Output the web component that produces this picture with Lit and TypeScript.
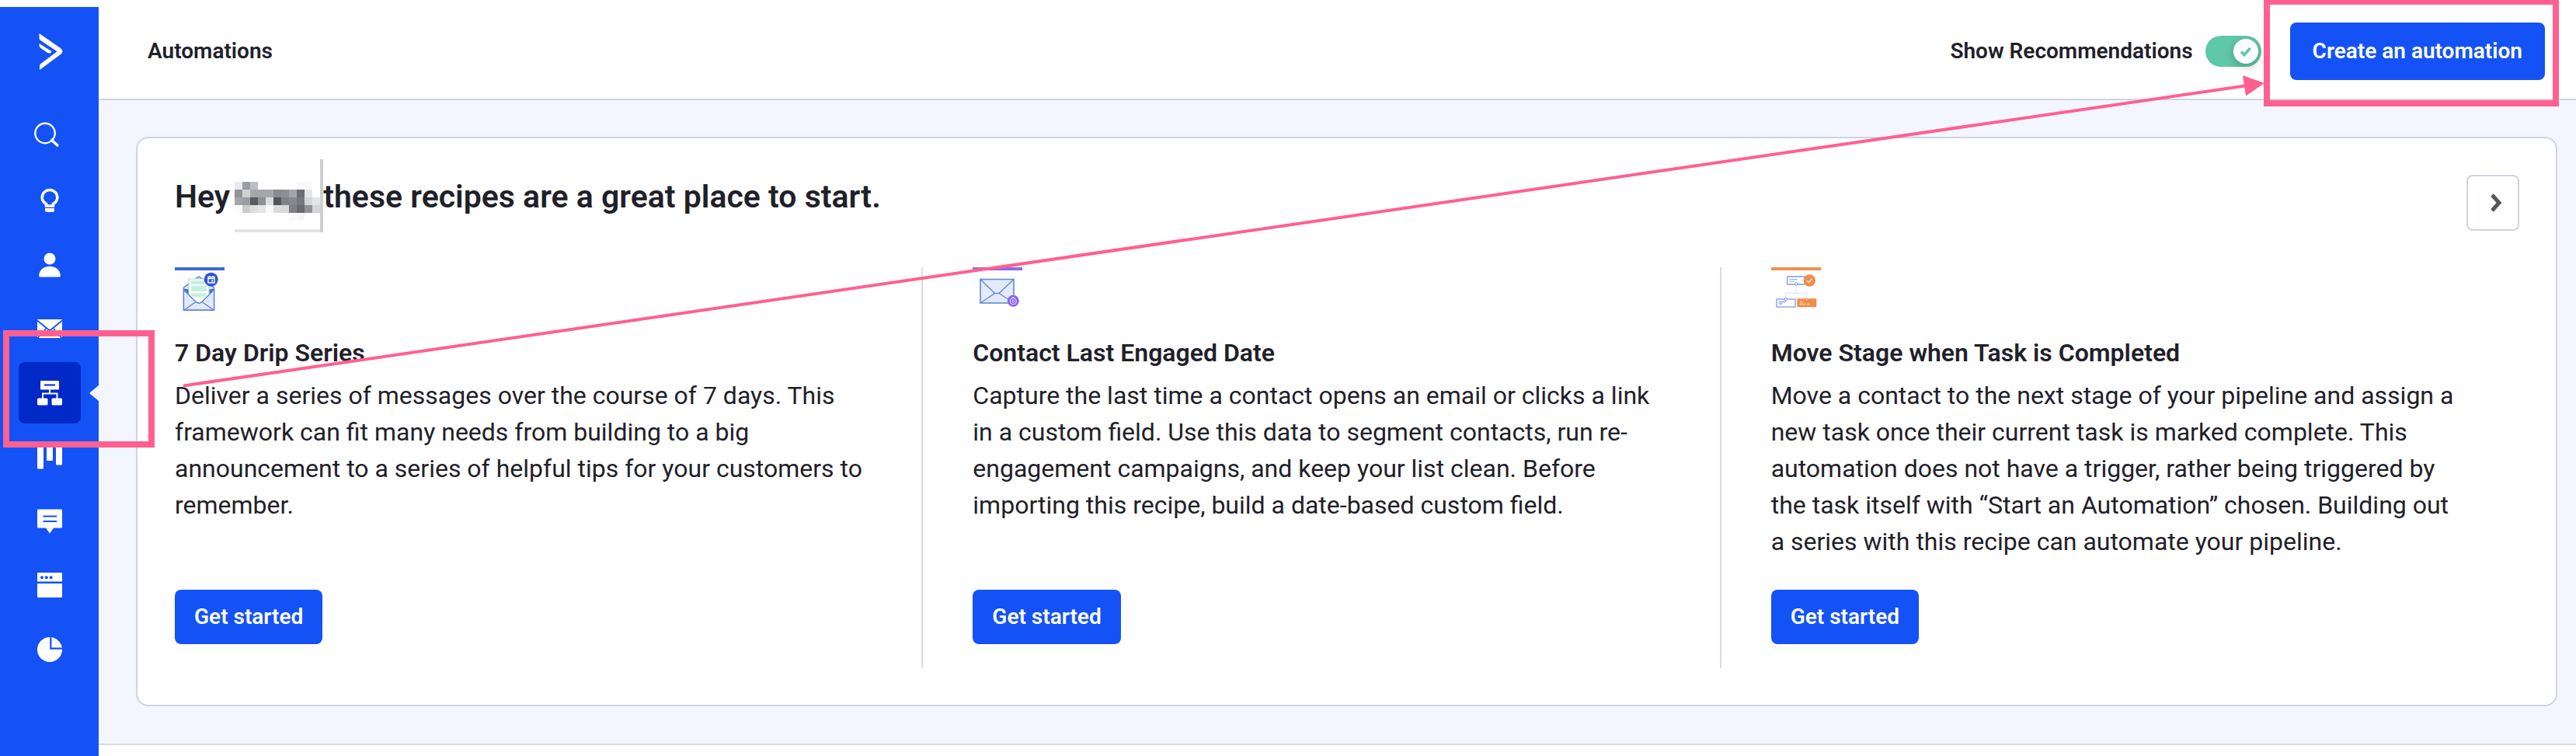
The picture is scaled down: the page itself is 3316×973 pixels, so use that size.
import { LitElement, html, svg, css, nothing, type SVGTemplateResult } from "lit";
import { customElement, property } from "lit/decorators.js";
import { classMap } from "lit/directives/class-map.js";

interface NavItem {
  label: string;
  icon: SVGTemplateResult;
  active?: boolean;
}

interface Recipe {
  title: string;
  text: string;
  art: SVGTemplateResult;
}

const NAV: NavItem[] = [
  {
    label: "Ideas",
    icon: svg`<path d="M15.5 27v-2.600C12 22.500 10.200 19.700 10.200 16.200a9.800 9.800 0 0 1 19.600 0c0 3.500-1.800 6.300-5.300 8.200V27z" fill="none" stroke="#fff" stroke-width="3.500"/><path d="M14 30h12v2.500q0 2.500-2.500 2.500h-7q-2.500 0-2.500-2.500z"/>`,
  },
  {
    label: "Contacts",
    icon: svg`<circle cx="20" cy="12" r="7.500"/><path d="M6.200 34C6.200 27 12 21.800 20 21.800S33.800 27 33.800 34q0 1.500-1.500 1.500H7.700q-1.500 0-1.500-1.500z"/>`,
  },
  {
    label: "Campaigns",
    icon: svg`<rect x="4" y="8" width="32" height="24" rx="1"/><path d="M4 9.500 18 21q2 1.500 4 0L36 9.500M4.500 32 15 20M35.500 32 25 20" fill="none" stroke="#1452f6" stroke-width="1.800"/>`,
  },
  {
    label: "Automations",
    active: true,
    icon: svg`<path d="M9 4h22q1 0 1 1v9.500q0 1-1 1H9q-1 0-1-1V5q0-1 1-1zM13 8.600v2h14v-2z" fill-rule="evenodd"/><path d="M20 15v5.500M11 27v-6.500h18.500V27" fill="none" stroke="#fff" stroke-width="2"/><rect x="4" y="26.500" width="13.500" height="9" rx="1.500"/><rect x="22.500" y="26.500" width="13.500" height="9" rx="1.500"/>`,
  },
  {
    label: "Deals",
    icon: svg`<rect x="4" y="4" width="8" height="31.500" rx="1"/><rect x="16" y="4" width="8" height="21" rx="1"/><rect x="28" y="4" width="8" height="26.500" rx="1"/>`,
  },
  {
    label: "Conversations",
    icon: svg`<path d="M5 4.500h30q1 0 1 1v22q0 1-1 1h-10L20 35.500 15 28.500H5q-1 0-1-1v-22q0-1 1-1z"/><path d="M11.500 13.500H29M11.500 20H29" stroke="#1452f6" stroke-width="2.200"/>`,
  },
  {
    label: "Website",
    icon: svg`<path d="M5 4h30q1 0 1 1v10.500H4V5q0-1 1-1zM4 18h32v17q0 1-1 1H5q-1 0-1-1z"/><g fill="#1452f6"><circle cx="10" cy="10.300" r="2"/><circle cx="15.800" cy="10.300" r="2"/><circle cx="21.600" cy="10.300" r="2"/></g>`,
  },
  {
    label: "Reports",
    icon: svg`<circle cx="20" cy="20" r="16"/><path d="M21.300 3v15.700H37" fill="none" stroke="#1452f6" stroke-width="2.200"/>`,
  },
];

const RECIPES: Recipe[] = [
  {
    title: "7 Day Drip Series",
    text: "Deliver a series of messages over the course of 7 days. This framework can fit many needs from building to a big announcement to a series of helpful tips for your customers to remember.",
    art: svg`<rect width="64" height="4" fill="#3f68d4"/>
      <path d="M11.500 26 31 12l19.500 14v29h-39z" fill="#dfe8fb" stroke="#5b80d8" stroke-width="1.500"/>
      <path d="M11.500 27.500 20 29v11zM50.500 27.500 42 29v11z" fill="#3f68d4"/>
      <path d="M18 15h26v22L31 47 18 37z" fill="#fff" stroke="#a5e2cb" stroke-width="1.200"/>
      <path d="M21 17h17v5H21zM21 24h20v7H21zM21 33.500h20v4.500H21z" fill="#c5f0df"/>
      <path d="M11.500 55V29l15.500 15.500q4 3.500 8 0L50.500 29v26z" fill="#e1e9fb" stroke="#5b80d8" stroke-width="1.300"/>
      <path d="M12 55 27 44.500M50 55 35 44.500" stroke="#5b80d8" stroke-width="1.300"/>
      <circle cx="46.700" cy="15.700" r="9" fill="#2a56d0"/>
      <path d="M43 12.500h8v7.500h-8zM43 14.500h8M45 11v2M49 11v2" fill="none" stroke="#fff" stroke-width="1.400"/><rect x="47" y="16.500" width="2" height="2" fill="#fff"/>`,
  },
  {
    title: "Contact Last Engaged Date",
    text: "Capture the last time a contact opens an email or clicks a link in a custom field. Use this data to segment contacts, run re-engagement campaigns, and keep your list clean. Before importing this recipe, build a date-based custom field.",
    art: svg`<rect width="64" height="4" fill="#8f6be8"/>
      <rect x="10" y="15.500" width="43" height="30.500" fill="#e3ebfb" stroke="#6489d6" stroke-width="1.600"/>
      <path d="M10 15.500 28.500 33.500h5.500L53 15.500M10 46l18.500-12.500M53 46 34 33.500" fill="none" stroke="#6489d6" stroke-width="1.400"/>
      <circle cx="52.300" cy="43.300" r="7.500" fill="#8c63ea"/>
      <circle cx="52.300" cy="43.700" r="4" fill="none" stroke="#fff" stroke-opacity=".75" stroke-width="1.100"/><circle cx="52.300" cy="43.700" r="1.700" fill="none" stroke="#fff" stroke-opacity=".7"/><path d="M50.500 38.800h3.500" stroke="#fff" stroke-opacity=".7"/>`,
  },
  {
    title: "Move Stage when Task is Completed",
    text: "Move a contact to the next stage of your pipeline and assign a new task once their current task is marked complete. This automation does not have a trigger, rather being triggered by the task itself with “Start an Automation” chosen. Building out a series with this recipe can automate your pipeline.",
    art: svg`<rect width="64" height="4" fill="#f0914f"/>
      <path d="M32.300 22v11.500M18.600 41v-7.500h27V41" fill="none" stroke="#e3e9fa" stroke-width="1.300"/>
      <rect x="20.500" y="12" width="27" height="10" rx="1" fill="#fff" stroke="#7e9be2" stroke-width="1.300"/>
      <path d="M23.500 15.500h10M23.500 18h7" stroke="#8aa5e8" stroke-width="1.200"/>
      <circle cx="49.300" cy="17" r="7.700" fill="#f08c48"/><path d="m45.800 17.300 2.400 2.400 4.400-5" fill="none" stroke="#fff" stroke-opacity=".85" stroke-width="1.400"/>
      <rect x="7" y="41" width="24" height="10" fill="#fff" stroke="#7e9be2" stroke-width="1.300"/>
      <path d="M9.500 44.500h9M9.500 47h5" stroke="#8aa5e8" stroke-width="1.600"/>
      <rect x="33.300" y="40.300" width="25" height="11" rx="1" fill="#f08c48"/>
      <path d="M36.500 44.500h4M36.500 47.500h8M46 47.500h4" stroke="#fbd5b9" stroke-width="1.600"/>
      <g fill="#fff" stroke="#6d8ee0"><circle cx="32.300" cy="21.300" r="1.700"/><circle cx="18.600" cy="41.300" r="1.700"/></g><circle cx="45.600" cy="41.300" r="1.500" fill="#fbd5b9" stroke="#f08c48"/>`,
  },
];

/** Ten-pixel blocks that hide the account owner's first name; "" leaves a block clear. */
const NAME_BLOCKS: string[][] = [
  ["#e8ebee", "#9b9da2", "#bcbec2", "", "", "", "", "", "#f9f9f9", "#f8f8f8", ""],
  ["#929396", "#d0d1d2", "#a5a6a9", "#a5a6a9", "#a5a7ab", "#8a8b90", "#8e8f94", "#a2a4a9", "#6e6f74", "#e5e6e9", ""],
  ["#a5a6ab", "#9c9da2", "#5a5b61", "#8e8f93", "#dcdcde", "#55565c", "#808187", "#88898e", "#77787d", "#d4d6d9", "#e3e5e7"],
  ["#fdfdfd", "#cacbcd", "#dcddde", "#e4e5e7", "#f9f9f9", "#dadbdd", "#d8d9db", "#7f8085", "#6a6b70", "#929398", "#d3d4d6"],
  ["", "", "", "", "", "", "", "#fafafa", "#f5f5f5", "", ""],
];

const base = css`
  * {
    box-sizing: border-box;
  }
  .primary {
    border: 0;
    border-radius: 8px;
    background: #1452f6;
    color: #fff;
    font: 600 28px/38px Roboto, sans-serif;
    cursor: pointer;
  }
`;

@customElement("side-nav")
export class SideNav extends LitElement {
  static styles = [
    base,
    css`
      :host {
        display: flex;
        flex-direction: column;
        align-items: center;
        padding-top: 34px;
        background: #1452f6;
      }
      svg {
        display: block;
        fill: #fff;
      }
      .search {
        margin: 62px 0 24px;
      }
      .list {
        display: grid;
        grid-auto-rows: 1fr;
        align-self: stretch;
        height: 660px;
        margin: 0;
        padding: 0;
        list-style: none;
      }
      .item {
        position: relative;
        display: grid;
        place-items: center;
      }
      .link {
        display: grid;
        place-items: center;
        width: 80px;
        height: 79px;
        border-radius: 8px;
      }
      .link.active {
        background: #0029c8;
      }
      .notch {
        position: absolute;
        right: 0;
        top: 31px;
        fill: #f3f6fe;
      }
      .mark {
        position: absolute;
        z-index: 3;
        left: 4px;
        top: -40px;
        width: 195px;
        height: 151px;
        border: 8px solid #ff6090;
        pointer-events: none;
      }
    `,
  ];

  render() {
    return html`
      <a href="#" aria-label="Home">
        <svg width="34" height="48" viewBox="0 0 34 48">
          <path d="M3.500 0 31 19q2.500 2 2.500 4.300T31 27L4 47v-5q0-2 1.500-3L26.500 23.300 5.200 9Q3.500 7.800 3.500 6z" />
          <path d="M3.500 13 18.500 22.500q1.500 1 .2 2.200-2.200 1.500-5.200-.2L5.500 19q-2-1.300-2-3.300z" />
        </svg>
      </a>
      <a class="search" href="#" aria-label="Search">
        <svg width="40" height="40" viewBox="0 0 40 40">
          <g fill="none" stroke="#fff"><circle cx="14" cy="18.500" r="12.700" stroke-width="2.400" /><path d="m22.800 27.500 7 6.500" stroke-width="3.600" stroke-linecap="round" /></g>
        </svg>
      </a>
      <ul class="list">
        ${NAV.map(
          (n) => html`<li class="item">
            <a class=${classMap({ link: true, active: !!n.active })} href="#" aria-label=${n.label}>
              <svg width="40" height="40" viewBox="0 0 40 40">${n.icon}</svg>
            </a>
            ${n.active
              ? html`<svg class="notch" width="12" height="20" viewBox="0 0 12 20"><path d="M12 0v20L1 11q-1-1 0-2z" /></svg>
                  <span class="mark"></span>`
              : nothing}
          </li>`
        )}
      </ul>
    `;
  }
}

@customElement("page-header")
export class PageHeader extends LitElement {
  static styles = [
    base,
    css`
      :host {
        display: flex;
        align-items: center;
        height: 129px;
        padding: 5px 40px 0 63px;
        border-bottom: 2px solid #d0d4e1;
        background: #fff;
      }
      .title {
        flex: 1;
        margin: 0;
        font: 600 28px/38px Roboto, sans-serif;
      }
      .label {
        margin-right: 16px;
        font: 600 28px/38px Roboto, sans-serif;
      }
      .switch {
        position: relative;
        display: block;
        width: 72px;
        height: 40px;
        margin-right: 37px;
      }
      .input {
        appearance: none;
        display: block;
        width: 72px;
        height: 40px;
        margin: 0;
        padding: 4px;
        border-radius: 20px;
        background: #5fc8a6;
      }
      .input::before {
        content: "";
        display: block;
        width: 32px;
        height: 32px;
        border-radius: 50%;
        background: #fff;
        box-shadow: 0 4px 12px rgba(0, 0, 0, 0.22);
      }
      .input:checked::before {
        margin-left: auto;
      }
      .tick {
        position: absolute;
        right: 12px;
        top: 12px;
        pointer-events: none;
      }
      .action {
        position: relative;
      }
      .create {
        display: block;
        height: 74px;
        padding: 0 29px;
      }
      .mark {
        position: absolute;
        z-index: 3;
        inset: -31px -18px -34px -34px;
        border: 8px solid #ff6090;
        pointer-events: none;
      }
    `,
  ];

  render() {
    return html`
      <h1 class="title">Automations</h1>
      <label class="label" for="rec">Show Recommendations</label>
      <span class="switch">
        <input class="input" id="rec" type="checkbox" role="switch" checked />
        <svg class="tick" width="16" height="16" viewBox="0 0 16 16"><path d="m2 8.500 3.800 4L13.500 4" fill="none" stroke="#5fc8a6" stroke-width="3.600" /></svg>
      </span>
      <div class="action">
        <button class="primary create" type="button">Create an automation</button>
        <span class="mark"></span>
      </div>
    `;
  }
}

@customElement("recipe-column")
export class RecipeColumn extends LitElement {
  @property({ attribute: false }) recipe!: Recipe;

  static styles = [
    base,
    css`
      :host {
        display: flex;
        flex-direction: column;
        align-items: flex-start;
        padding: 0 64px 31px 0;
      }
      .art {
        display: block;
        margin-bottom: 27px;
      }
      .title {
        margin: 0 0 8px;
        font: 600 32px/47px Roboto, sans-serif;
      }
      .text {
        margin: 0 0 38px;
        padding-right: 8px;
        font: 400 32px/47px Roboto, sans-serif;
      }
      .start {
        height: 70px;
        margin-top: auto;
        padding: 0 25px;
      }
    `,
  ];

  render() {
    return html`
      <svg class="art" width="64" height="60" viewBox="0 0 64 60">${this.recipe.art}</svg>
      <h3 class="title">${this.recipe.title}</h3>
      <p class="text">${this.recipe.text}</p>
      <button class="primary start" type="button">Get started</button>
    `;
  }
}

@customElement("app-root")
export class AppRoot extends LitElement {
  static styles = [
    base,
    css`
      :host {
        position: relative;
        display: flex;
        min-height: 100vh;
        overflow: hidden;
        background: #fff;
        color: #1f2129;
        font-family: Roboto, sans-serif;
      }
      .nav {
        flex: none;
        width: 127px;
        margin-top: 9px;
      }
      .main {
        flex: 1;
        min-width: 0;
      }
      .band {
        padding: 47px 24px 48px 48px;
        border-bottom: 2px solid #d8dbe6;
        background: #f3f6fe;
      }
      .card {
        padding: 47px 47px 47px 48px;
        border: 2px solid #d0d4e1;
        border-radius: 16px;
        background: #fff;
      }
      .top {
        display: flex;
        align-items: flex-start;
        justify-content: space-between;
        margin-bottom: 47px;
      }
      .greeting {
        display: flex;
        align-items: center;
        height: 56px;
        margin: 0;
        font: 600 41px/56px Roboto, sans-serif;
      }
      .name {
        margin-left: 6px;
      }
      .next {
        display: grid;
        place-items: center;
        width: 68px;
        height: 72px;
        padding: 0 0 0 8px;
        border: 2px solid #d0d4e1;
        border-radius: 8px;
        background: #fff;
      }
      .recipes {
        display: grid;
        grid-template-columns: repeat(3, minmax(0, 1fr));
        gap: 64px;
      }
      .divided {
        border-right: 2px solid #d8dbe5;
      }
      .line {
        position: absolute;
        z-index: 2;
        left: 236px;
        top: 108px;
        width: calc(100% - 662px);
        height: 391px;
        pointer-events: none;
      }
      .head {
        position: absolute;
        z-index: 2;
        right: 401px;
        top: 97px;
        pointer-events: none;
      }
    `,
  ];

  render() {
    return html`
      <side-nav class="nav"></side-nav>
      <main class="main">
        <page-header></page-header>
        <section class="band">
          <div class="card">
            <div class="top">
              <h2 class="greeting">
                <span>Hey</span>
                <svg class="name" width="114" height="96" viewBox="0 0 114 96" shape-rendering="crispEdges" aria-hidden="true">
                  ${NAME_BLOCKS.map((row, y) =>
                    row.map((c, x) => (c ? svg`<rect x=${x * 10} y=${29 + y * 10} width="10" height="10" fill=${c} />` : nothing))
                  )}
                  <rect y="90" width="110" height="4" fill="#e2e3e4" />
                  <rect x="110" width="4" height="94" fill="#cdd0d3" />
                </svg>
                <span>these recipes are a great place to start.</span>
              </h2>
              <button class="next" type="button" aria-label="Next recipes">
                <svg width="16" height="24" viewBox="0 0 16 24"><path d="m3 2 9 10-9 10" fill="none" stroke="#56585e" stroke-width="5" /></svg>
              </button>
            </div>
            <div class="recipes">
              ${RECIPES.map((r, i) => html`<recipe-column class=${classMap({ divided: i < 2 })} .recipe=${r}></recipe-column>`)}
            </div>
          </div>
        </section>
      </main>
      <svg class="line" viewBox="0 0 2654 391" preserveAspectRatio="none" aria-hidden="true">
        <path d="M0 388.500 2654 2.500" fill="none" stroke="#ff6090" stroke-width="4" vector-effect="non-scaling-stroke" />
      </svg>
      <svg class="head" width="28" height="27" viewBox="0 0 28 27" aria-hidden="true"><path d="M0 0 28 10 4 26.500z" fill="#ff6090" /></svg>
    `;
  }
}
